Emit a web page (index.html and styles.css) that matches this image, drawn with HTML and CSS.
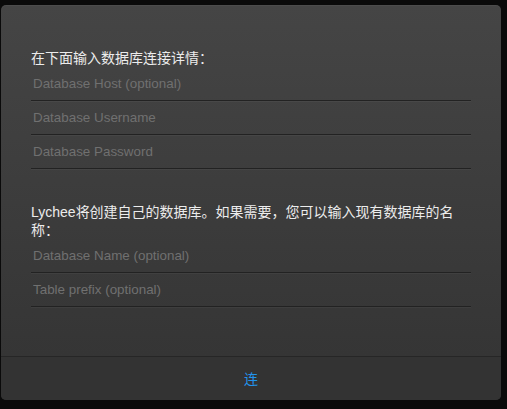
FILE: index.html
```html
<!DOCTYPE html>
<html lang="zh">
<head>
<meta charset="utf-8">
<title>Lychee setup</title>
<link rel="stylesheet" href="styles.css">
</head>
<body>
<div class="modal">
  <div class="modal-content">
    <p class="intro">在下面输入数据库连接详情：</p>
    <input class="field" type="text" placeholder="Database Host (optional)">
    <input class="field" type="text" placeholder="Database Username">
    <input class="field" type="password" placeholder="Database Password">
    <p class="intro second">Lychee将创建自己的数据库。如果需要，您可以输入现有数据库的名称：</p>
    <input class="field" type="text" placeholder="Database Name (optional)">
    <input class="field" type="text" placeholder="Table prefix (optional)">
  </div>
  <div class="modal-buttons">
    <a class="button">连</a>
  </div>
</div>
</body>
</html>
```
FILE: styles.css
```css
html, body {
  margin: 0;
  padding: 0;
  background: #0a0a0a;
}
body {
  padding: 5px 0 0 1px;
  font-family: "Liberation Sans", "Noto Sans CJK SC", sans-serif;
}
.modal {
  width: 500px;
  border-radius: 5px;
  overflow: hidden;
  background: linear-gradient(to bottom, #454545, #333333);
  box-shadow: inset 0 1px 0 rgba(255, 255, 255, 0.04);
}
.modal-content {
  display: flex;
  flex-direction: column;
  padding: 44px 30px 49px 30px;
}
.intro {
  margin: 0;
  color: #ececec;
  font-size: 14px;
  line-height: 18px;
}
.intro.second {
  margin-top: 34px;
}
.field {
  display: block;
  box-sizing: border-box;
  width: 100%;
  height: 34px;
  margin: 0;
  padding: 0 2px;
  border: none;
  border-bottom: 1px solid #222;
  box-shadow: 0 1px 0 rgba(255, 255, 255, 0.04);
  background: transparent;
  color: #fff;
  font-family: "Liberation Sans", sans-serif;
  font-size: 13.4px;
  outline: none;
}
.field::placeholder {
  color: #707070;
}
.modal-buttons {
  display: flex;
  height: 43px;
  border-top: 1px solid #262626;
  background: #333;
}
.button {
  flex: 1;
  display: flex;
  align-items: center;
  justify-content: center;
  padding-bottom: 2px;
  color: #2293ec;
  font-size: 14px;
  font-family: "Noto Sans CJK SC", sans-serif;
}
```
